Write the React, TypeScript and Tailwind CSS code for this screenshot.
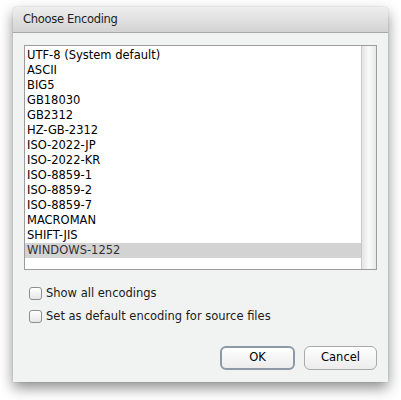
import React from "react";

const items = [
  "UTF-8 (System default)",
  "ASCII",
  "BIG5",
  "GB18030",
  "GB2312",
  "HZ-GB-2312",
  "ISO-2022-JP",
  "ISO-2022-KR",
  "ISO-8859-1",
  "ISO-8859-2",
  "ISO-8859-7",
  "MACROMAN",
  "SHIFT-JIS",
  "WINDOWS-1252",
];

function Check({ label }: { label: string }) {
  return (
    <div className="flex items-center h-[23px]">
      <span className="w-[13px] h-[13px] rounded-[3px] border border-[#8e8e8e] bg-gradient-to-b from-[#ffffff] to-[#e6e6e6] shadow-[inset_0_1px_0_#fff]" />
      <span className="ml-[4px] text-[11.5px] text-[#1a1a1a]">{label}</span>
    </div>
  );
}

export default function App() {
  return (
    <div
      className="w-[401px] h-[400px] bg-white pt-[7px] pl-[13px]"
      style={{ fontFamily: '"DejaVu Sans", sans-serif' }}
    >
      <div className="w-[375px] h-[375px] flex flex-col bg-[#f1f2f2] rounded-t-[4px] shadow-[0_6px_14px_rgba(0,0,0,0.45),0_0_1px_rgba(0,0,0,0.4)]">
        <div className="h-[26px] rounded-t-[4px] bg-gradient-to-b from-[#eeeeee] to-[#d3d3d3] border-b border-[#a8a8a8] flex items-center pl-[10px]">
          <span className="text-[11.5px] tracking-[-0.3px] text-[#222]">Choose Encoding</span>
        </div>
        <div className="flex-1 flex flex-col px-[11px] pt-[12px]">
          <div className="h-[225px] border border-[#9c9c9c] bg-white flex">
            <div className="flex-1 pt-[2px]">
              {items.map((it, i) => (
                <div
                  key={it}
                  className={
                    "h-[15px] leading-[15px] pl-[2px] text-[11.5px] " +
                    (i === items.length - 1 ? "bg-[#d3d3d3] text-[#333]" : "text-black")
                  }
                >
                  {it}
                </div>
              ))}
            </div>
            <div className="w-[15px] border-l border-[#c8c8c8] bg-gradient-to-r from-[#e4e4e4] via-[#fafafa] to-[#e8e8e8]" />
          </div>
          <div className="mt-[12px] pl-[5px] flex flex-col">
            <Check label="Show all encodings" />
            <Check label="Set as default encoding for source files" />
          </div>
          <div className="mt-[18px] flex justify-end gap-[9px] pr-[0px]">
            <button className="w-[75px] h-[24px] rounded-[6px] border-2 border-[#8d99a6] bg-gradient-to-b from-[#ffffff] to-[#ececec] text-[11.5px] text-black">
              OK
            </button>
            <button className="w-[73px] h-[24px] rounded-[6px] border border-[#a9a9a9] bg-gradient-to-b from-[#ffffff] to-[#ececec] text-[11.5px] text-black">
              Cancel
            </button>
          </div>
        </div>
      </div>
    </div>
  );
}
